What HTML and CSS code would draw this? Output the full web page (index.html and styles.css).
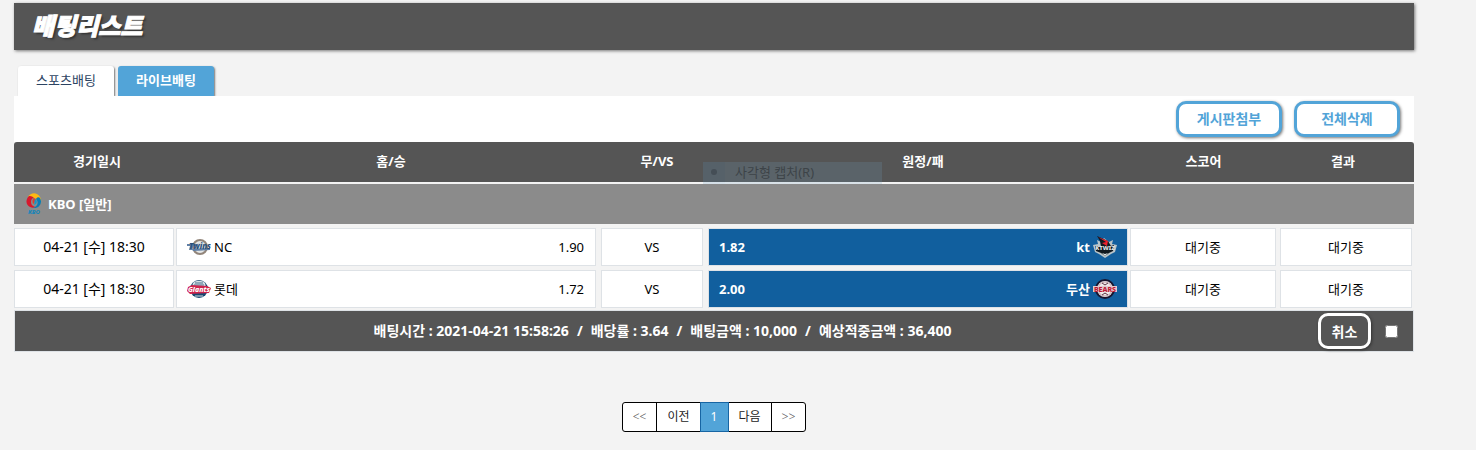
FILE: index.html
```html
<!DOCTYPE html>
<html lang="ko">
<head>
<meta charset="utf-8">
<title>배팅리스트</title>
<link rel="stylesheet" href="styles.css">
</head>
<body>
<main class="page">
  <header class="title-bar"><h1>배팅리스트</h1></header>

  <nav class="tabs">
    <a class="tab tab-active" href="#sports">스포츠배팅</a>
    <a class="tab" href="#live">라이브배팅</a>
  </nav>

  <div class="toolbar">
    <button class="btn" type="button">게시판첨부</button>
    <button class="btn" type="button">전체삭제</button>
  </div>

  <section class="bets">
    <table class="bet-table">
      <colgroup>
        <col class="c-date"><col class="c-home"><col class="c-vs"><col class="c-away"><col class="c-score"><col class="c-result">
      </colgroup>
      <thead>
        <tr><th class="h-date">경기일시</th><th class="h-home">홈/승</th><th class="h-vs">무/VS</th><th class="h-away">원정/패</th><th>스코어</th><th class="h-result">결과</th></tr>
      </thead>
      <tbody>
        <tr class="league">
          <td colspan="6"><div class="league-name">
            <svg class="kbo" viewBox="0 0 16 22" aria-hidden="true">
              <path d="M2 4C5 -1 11 -1 14 4C16 7 15 10 13 12C14 7 9 3 3 6Z" fill="#fdb913"/>
              <path d="M3 3C-1 7 0 12 4 14C6 15 8 15 10 14C5 13 3 9 8 5C6 3 4 3 3 3Z" fill="#d7192d"/>
              <path d="M14 5C17 10 13 16 7 15C12 13 13 9 10 6C11 4 13 4 14 5Z" fill="#087db8"/>
              <path d="M7 5C4 7 5 11 8 12C7 9 8 8 9 7Z" fill="#8b8b8b"/>
              <path d="M8 5C6 7 6 10 8 11C8 9 9 8 10 7Z" fill="#e53b28"/>
              <path d="M9 6C12 8 11 11 8 12C9 10 8 8 9 6Z" fill="#1597c9"/>
              <text x="8" y="21" text-anchor="middle" class="mark kbo-mark">KBO</text>
            </svg>
            <span>KBO [일반]</span>
          </div></td>
        </tr>
        <tr class="game">
          <td><div class="box box-date">04-21 [수] 18:30</div></td>
          <td><div class="box box-home">
            <span class="team">
              <svg class="logo" viewBox="0 0 24 20" aria-hidden="true">
                <circle cx="13" cy="10" r="7" fill="#d3d8dc" stroke="#92857a" stroke-width="2"/>
                <circle cx="13" cy="10" r="5" fill="none" stroke="#eeeeea"/>
                <path d="M0 7H9V9H6L5 13H2L3 9H0Z M5 12L23 11V13L6 14Z" fill="#5f7fa6"/>
                <text x="13" y="12" text-anchor="middle" class="mark twins-mark">Twins</text>
              </svg>
              <span>NC</span>
            </span>
            <span>1.90</span>
          </div></td>
          <td><div class="box box-vs">VS</div></td>
          <td><div class="box box-away">
            <span>1.82</span>
            <span class="team">
              <span>kt</span>
              <svg class="logo" viewBox="0 0 24 22" aria-hidden="true">
                <path d="M4 4L8 6L11 2L16 6L20 4L19 8L24 9L22 16L18 18L12 22L6 18L2 16L0 9L5 8Z" fill="#bac5c9"/>
                <path d="M4 0L15 5L18 10L21 9L20 15L16 17L12 20L8 17L3 15L2 10L8 11L7 5Z" fill="#101920"/>
                <path d="M5 1L15 5L14 10L9 7L13 6Z" fill="#ed202d"/>
                <path d="M9 17L12 20L15 17L12 18Z" fill="#dce4e5"/>
                <text x="12" y="14" text-anchor="middle" class="mark wiz-mark">KTWIZ</text>
              </svg>
            </span>
          </div></td>
          <td><div class="box box-score">대기중</div></td>
          <td><div class="box box-result">대기중</div></td>
        </tr>
        <tr class="game">
          <td><div class="box box-date">04-21 [수] 18:30</div></td>
          <td><div class="box box-home">
            <span class="team">
              <svg class="logo" viewBox="0 0 24 20" aria-hidden="true">
                <circle cx="12" cy="10" r="9" fill="#17476f"/>
                <path d="M6 4C9 1 15 1 18 4L19 8H5Z" fill="#d8e1e5"/>
                <path d="M8 4H16M7 6H17" stroke="#446f8c" stroke-width="1"/>
                <path d="M5 6L20 7L24 9L22 14L3 15L0 12L1 8Z" fill="#cf244c"/>
                <path d="M8 17H16" stroke="#d8e1e5"/>
                <text x="12" y="13" text-anchor="middle" class="mark giants-mark">Giants</text>
              </svg>
              <span>롯데</span>
            </span>
            <span>1.72</span>
          </div></td>
          <td><div class="box box-vs">VS</div></td>
          <td><div class="box box-away">
            <span>2.00</span>
            <span class="team">
              <span>두산</span>
              <svg class="logo" viewBox="0 0 24 20" aria-hidden="true">
                <circle cx="12" cy="10" r="9" fill="#f0e9ea" stroke="#18152e" stroke-width="2"/>
                <circle cx="12" cy="10" r="7" fill="none" stroke="#c5a7ae"/>
                <path d="M9 4L12 6L15 4M9 16L12 14L15 16" fill="none" stroke="#5c3542"/>
                <path d="M0 7H24V13H0Z" fill="#e4c9ce"/>
                <text x="12" y="13" text-anchor="middle" class="mark bears-mark">BEARS</text>
              </svg>
            </span>
          </div></td>
          <td><div class="box box-score">대기중</div></td>
          <td><div class="box box-result">대기중</div></td>
        </tr>
      </tbody>
    </table>

    <div class="summary">
      <p class="totals"><span>배팅시간 : 2021-04-21 15:58:26</span><span>/</span><span>배당률 : 3.64</span><span>/</span><span>배팅금액 : 10,000</span><span>/</span><span>예상적중금액 : 36,400</span></p>
      <div class="actions">
        <button class="cancel" type="button">취소</button>
        <input class="pick" type="checkbox" aria-label="배팅 선택">
      </div>
    </div>

    <div class="capture-menu"><span class="dot"></span><span class="capture-label">사각형 캡처(R)</span></div>
  </section>

  <nav class="pager" aria-label="페이지">
    <a class="arrow" href="#first">&lt;&lt;</a><a href="#prev">이전</a><a class="current" href="#1" aria-current="page">1</a><a href="#next">다음</a><a class="arrow" href="#last">&gt;&gt;</a>
  </nav>
</main>
</body>
</html>
```
FILE: styles.css
```css
* { box-sizing: border-box; }

body {
  margin: 0;
  background: #f3f3f3;
  color: #000;
  font: 13px/20px "Noto Sans", "Noto Sans CJK KR", sans-serif;
}

a { color: inherit; text-decoration: none; }
button { font-family: inherit; cursor: pointer; }

.page { margin: 0 62px 0 14px; padding-top: 3px; }

.title-bar {
  display: flex;
  align-items: center;
  height: 47px;
  padding: 0 18px 4px;
  background: #555;
  box-shadow: 1px 1px 3px #777;
}

.title-bar h1 {
  margin: 0;
  color: #fff;
  font-family: "Noto Sans CJK KR", sans-serif;
  font-size: 24px;
  line-height: 32px;
  font-weight: 900;
  font-style: italic;
  -webkit-text-stroke: 1px #fff;
  text-shadow: 2px 2px 2px #333;
}

.tabs { display: flex; gap: 4px; padding: 16px 4px 0; overflow: hidden; }

.tab {
  width: 96px;
  height: 30px;
  border-radius: 3px 3px 0 0;
  background: #52a4d8;
  box-shadow: 1px 1px 2px #777;
  color: #fff;
  font-weight: 700;
  line-height: 28px;
  text-align: center;
}

.tab-active { background: #fff; color: #2c4362; font-weight: 400; }

.toolbar {
  display: flex;
  justify-content: flex-end;
  gap: 12px;
  padding: 5px 14px;
  background: #fff;
}

.btn {
  width: 106px;
  height: 36px;
  padding: 0 0 2px;
  border: 3px solid #52a4d8;
  border-radius: 10px;
  background: #fff;
  box-shadow: 1px 1px 3px #777;
  color: #52a4d8;
  font-size: 14px;
  font-weight: 700;
}

.bets { position: relative; }

.bet-table { width: 100%; border-spacing: 0; table-layout: fixed; }
.bet-table th, .bet-table td { padding: 0; }

.c-date { width: 11.5%; }
.c-home { width: 30.29%; }
.c-vs { width: 7.64%; }
.c-away { width: 30.21%; }
.c-score { width: 10.64%; }
.c-result { width: 9.72%; }

.bet-table th {
  height: 42px;
  padding-bottom: 2px;
  border-bottom: 2px solid #f3f3f3;
  background: #555;
  color: #fff;
}
.bet-table th:first-child { border-top-left-radius: 3px; }
.bet-table th:last-child { border-top-right-radius: 3px; }
.bet-table .h-date { padding-left: 5px; }
.bet-table .h-home { padding-left: 8px; }
.bet-table .h-vs { padding-left: 9px; }
.bet-table .h-away { padding-left: 11px; }
.bet-table .h-result { padding-right: 6px; }

.league-name {
  display: flex;
  align-items: center;
  gap: 6px;
  height: 40px;
  margin-bottom: 2px;
  padding-left: 12px;
  background: #8b8b8b;
  color: #fff;
  font-weight: 700;
}

.kbo { width: 16px; height: 22px; }
.logo { width: 24px; height: 22px; }

.box {
  display: flex;
  align-items: center;
  justify-content: center;
  height: 38px;
  margin: 2px 1px 2px 0;
  border: 1px solid #dee2e6;
  background: #fff;
}

.box-date { font-size: 14px; }
.box-home, .box-away { justify-content: space-between; }
.box-home { margin: 2px 3px 2px 1px; padding: 0 11px 0 10px; }
.box-vs { margin: 2px 3px 2px 2px; }
.box-away {
  margin: 2px 1px 2px 2px;
  padding: 0 10px;
  background: #115f9e;
  color: #fff;
  font-weight: 700;
}
.box-score { margin: 2px 2px 2px 1px; }
.box-result { margin: 2px; }

.team { display: flex; align-items: center; gap: 3px; }

.mark { font-family: "Noto Sans", sans-serif; font-weight: 800; }
.kbo-mark { fill: #1685b8; font-size: 6px; font-style: italic; }
.twins-mark { fill: #294f7b; font-size: 8px; font-style: italic; }
.wiz-mark { fill: #e1e8ea; font-size: 6px; }
.giants-mark { fill: #fff; font-size: 7px; font-style: italic; }
.bears-mark { fill: #bd1732; font-size: 7px; }

.summary {
  display: flex;
  align-items: center;
  height: 42px;
  border: 1px solid #dee2e6;
  background: #555;
  color: #fff;
}

.totals {
  display: flex;
  flex: 1;
  justify-content: center;
  gap: 8px;
  margin: 0;
  padding-right: 8px;
  font-size: 14px;
  font-weight: 700;
  white-space: nowrap;
}

.actions { display: flex; align-items: center; gap: 14px; padding-right: 15px; }

.cancel {
  width: 53px;
  height: 36px;
  padding: 0;
  border: 3px solid #fff;
  border-radius: 10px;
  background: #555;
  box-shadow: 1px 1px 3px #333;
  color: #fff;
  font-size: 14px;
  font-weight: 700;
}

.pick { width: 13px; height: 13px; margin: 0; }

.capture-menu {
  position: absolute;
  top: 20px;
  left: 689px;
  display: flex;
  align-items: center;
  width: 179px;
  height: 22px;
  padding-bottom: 2px;
  background: linear-gradient(90deg, rgba(90, 145, 185, .2) 22px, rgba(110, 155, 185, .2) 22px);
  color: #3d4348;
  font-size: 13px;
}

.dot { width: 6px; height: 6px; margin: 0 18px 0 8px; border-radius: 50%; background: #454e56; }

.pager { display: flex; justify-content: center; margin-top: 50px; font-size: 12px; }

.pager a {
  min-width: 29px;
  height: 30px;
  margin-left: -1px;
  padding: 0 10px;
  border: 1px solid #000;
  background: #fff;
  color: #222;
  line-height: 28px;
  text-align: center;
}
.pager a:first-child { margin-left: 0; border-radius: 3px 0 0 3px; }
.pager a:last-child { border-radius: 0 3px 3px 0; }
.pager .current { z-index: 1; border-color: #1765a3; background: #52a4d8; color: #fff; }
.pager .arrow { color: #555; font-weight: 300; }
```
